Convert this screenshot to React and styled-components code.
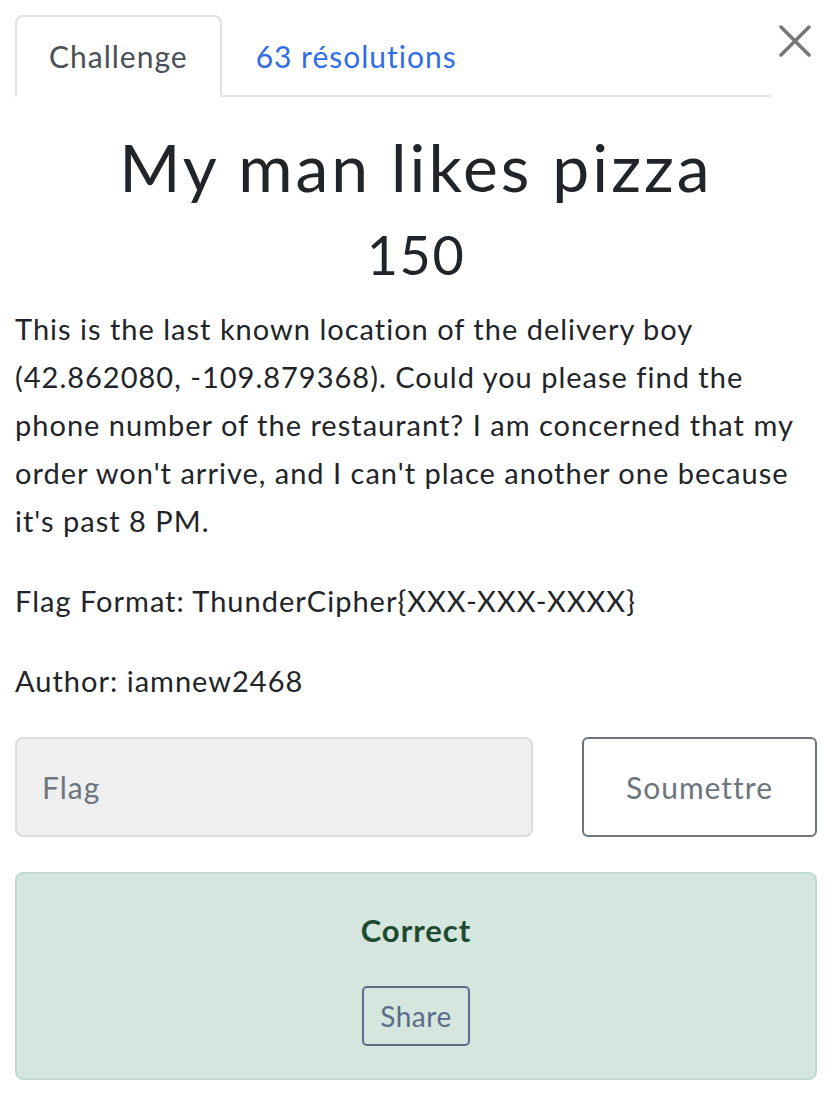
import styled, { createGlobalStyle } from "styled-components";

const GlobalStyle = createGlobalStyle`
  html, body {
    margin: 0;
    padding: 0;
    background: #ffffff;
  }
  body {
    font-family: Lato, "Open Sans", sans-serif;
    color: #212529;
  }
`;

const Modal = styled.div`
  width: 834px;
  height: 1102px;
  box-sizing: border-box;
  padding: 15px 17px 0 15px;
  position: relative;
`;

const TabBar = styled.div`
  display: flex;
  align-items: flex-end;
  margin-right: 47px;
  border-bottom: 2px solid #dee2e6;
`;

const Tab = styled.div`
  height: 82px;
  box-sizing: border-box;
  padding: 0 32px;
  display: flex;
  align-items: center;
  font-size: 30px;
  letter-spacing: 1px;
  margin-bottom: -2px;
  border: 2px solid ${(p) => (p.active ? "#dee2e6" : "transparent")};
  border-bottom-color: ${(p) => (p.active ? "#ffffff" : "transparent")};
  border-radius: 8px 8px 0 0;
  color: ${(p) => (p.active ? "#495057" : "#2f6ee6")};
  background: ${(p) => (p.active ? "#ffffff" : "transparent")};
`;

const Close = styled.button`
  position: absolute;
  top: 25px;
  right: 23px;
  width: 32px;
  height: 32px;
  padding: 0;
  border: none;
  background: none;
  cursor: pointer;
`;

const Title = styled.h2`
  margin: 29px 0 0;
  text-align: center;
  font-size: 66px;
  font-weight: 400;
  letter-spacing: 3px;
  line-height: 82px;
`;

const Value = styled.h3`
  margin: 13px 0 0;
  text-align: center;
  font-size: 54px;
  font-weight: 400;
  letter-spacing: 1.5px;
  line-height: 67px;
`;

const Description = styled.div`
  margin-top: 17px;
  font-size: 29px;
  letter-spacing: 1px;
  line-height: 48px;

  p {
    margin: 0 0 32px;
  }
`;

const SubmitRow = styled.div`
  display: flex;
  gap: 49px;
`;

const FlagInput = styled.input`
  flex: 1;
  height: 100px;
  box-sizing: border-box;
  padding: 0 25px;
  font-family: Lato, sans-serif;
  font-size: 30px;
  letter-spacing: 1px;
  background: #efefef;
  border: 2px solid #dcdcdc;
  border-radius: 8px;
  color: #495057;
  outline: none;

  &::placeholder {
    color: #6c757d;
  }
`;

const SubmitButton = styled.button`
  width: 235px;
  height: 100px;
  box-sizing: border-box;
  font-family: Lato, sans-serif;
  font-size: 30px;
  letter-spacing: 1px;
  color: #6c757d;
  background: #ffffff;
  border: 2px solid #6c757d;
  border-radius: 6px;
`;

const Alert = styled.div`
  margin-top: 35px;
  height: 208px;
  box-sizing: border-box;
  background: #d4e6dd;
  border: 2px solid #c1dccd;
  border-radius: 8px;
  display: flex;
  flex-direction: column;
  align-items: center;
  padding-top: 36px;
`;

const AlertTitle = styled.strong`
  font-size: 31px;
  letter-spacing: 1px;
  line-height: 40px;
  color: #1d4b30;
  font-weight: 700;
`;

const ShareButton = styled.button`
  margin-top: 36px;
  height: 60px;
  padding: 0 16px;
  font-family: Lato, sans-serif;
  font-size: 28px;
  letter-spacing: 0.5px;
  color: #5b6b8a;
  background: transparent;
  border: 2px solid #5b6b8a;
  border-radius: 5px;
`;

export default function App() {
  return (
    <>
      <GlobalStyle />
      <Modal>
        <Close aria-label="Close">
          <svg width="32" height="32" viewBox="0 0 32 32">
            <path d="M2 2 L30 30 M30 2 L2 30" stroke="#777" strokeWidth="3.5" strokeLinecap="round" />
          </svg>
        </Close>
        <TabBar>
          <Tab active>Challenge</Tab>
          <Tab>63 résolutions</Tab>
        </TabBar>
        <Title>My man likes pizza</Title>
        <Value>150</Value>
        <Description>
          <p>
            This is the last known location of the delivery boy (42.862080, -109.879368). Could you please find the phone number of the restaurant? I am concerned that my order won't arrive, and I can't place another one because it's past 8 PM.
          </p>
          <p>Flag Format: ThunderCipher{"{XXX-XXX-XXXX}"}</p>
          <p>Author: iamnew2468</p>
        </Description>
        <SubmitRow>
          <FlagInput placeholder="Flag" />
          <SubmitButton>Soumettre</SubmitButton>
        </SubmitRow>
        <Alert>
          <AlertTitle>Correct</AlertTitle>
          <ShareButton>Share</ShareButton>
        </Alert>
      </Modal>
    </>
  );
}
